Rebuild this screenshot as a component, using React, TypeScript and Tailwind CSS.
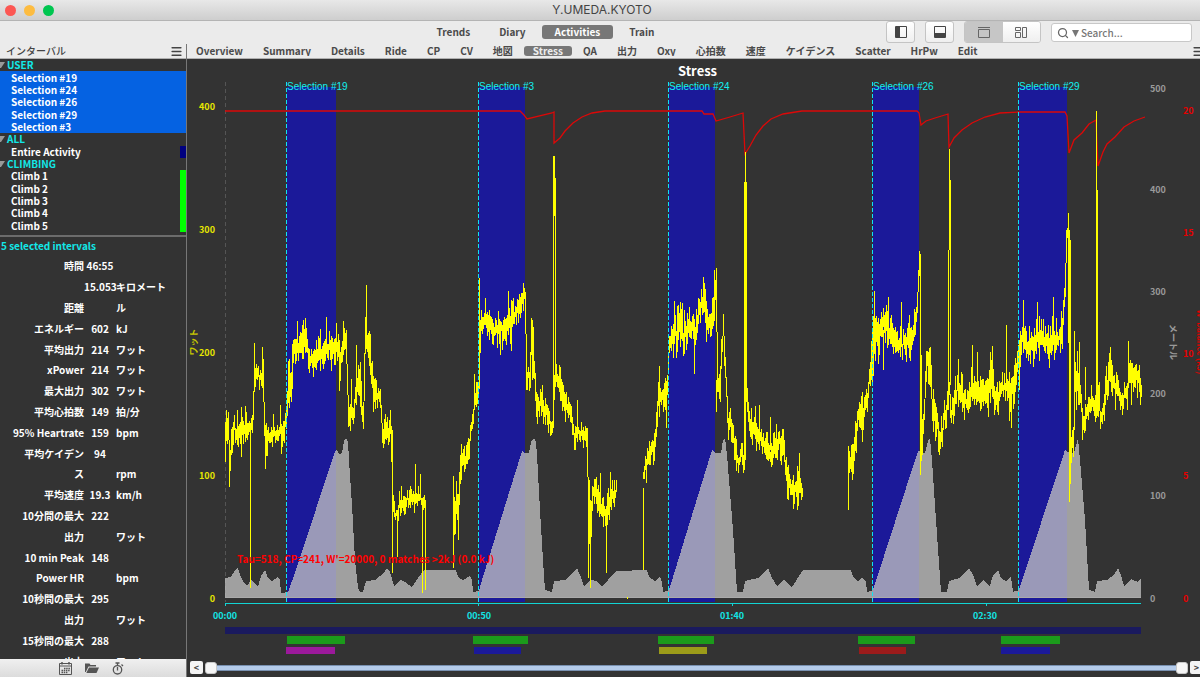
import React, { useState } from 'react';
import { Menu, Search } from 'lucide-react';

const VIEWS = ['Trends', 'Diary', 'Activities', 'Train'];

const TABS = [
  'Overview', 'Summary', 'Details', 'Ride', 'CP', 'CV', '地図', 'Stress', 'QA', '出力',
  'Oxy', '心拍数', '速度', 'ケイデンス', 'Scatter', 'HrPw', 'Edit',
];

interface TreeRow {
  label: string;
  kind: 'group' | 'item';
  selected?: boolean;
  swatch?: string;
}

const TREE: TreeRow[] = [
  { label: 'USER', kind: 'group' },
  { label: 'Selection #19', kind: 'item', selected: true },
  { label: 'Selection #24', kind: 'item', selected: true },
  { label: 'Selection #26', kind: 'item', selected: true },
  { label: 'Selection #29', kind: 'item', selected: true },
  { label: 'Selection #3', kind: 'item', selected: true },
  { label: 'ALL', kind: 'group' },
  { label: 'Entire Activity', kind: 'item', swatch: 'bg-[#000080]' },
  { label: 'CLIMBING', kind: 'group' },
  { label: 'Climb 1', kind: 'item', swatch: 'bg-[#00ff00]' },
  { label: 'Climb 2', kind: 'item', swatch: 'bg-[#00ff00]' },
  { label: 'Climb 3', kind: 'item', swatch: 'bg-[#00ff00]' },
  { label: 'Climb 4', kind: 'item', swatch: 'bg-[#00ff00]' },
  { label: 'Climb 5', kind: 'item', swatch: 'bg-[#00ff00]' },
];

const METRICS: [string, string, string][] = [
  ['時間', '46:55', ''],
  ['', '15.053', 'キロメート'],
  ['距離', '', 'ル'],
  ['エネルギー', '602', 'kJ'],
  ['平均出力', '214', 'ワット'],
  ['xPower', '214', 'ワット'],
  ['最大出力', '302', 'ワット'],
  ['平均心拍数', '149', '拍/分'],
  ['95% Heartrate', '159', 'bpm'],
  ['平均ケイデン', '94', ''],
  ['ス', '', 'rpm'],
  ['平均速度', '19.3', 'km/h'],
  ['10分間の最大', '222', ''],
  ['出力', '', 'ワット'],
  ['10 min Peak', '148', ''],
  ['Power HR', '', 'bpm'],
  ['10秒間の最大', '295', ''],
  ['出力', '', 'ワット'],
  ['15秒間の最大', '288', ''],
  ['出力', '', 'ワット'],
];

const SELECTIONS = [
  { label: 'Selection #19', x: 287, w: 49 },
  { label: 'Selection #3', x: 479, w: 46 },
  { label: 'Selection #24', x: 669, w: 46 },
  { label: 'Selection #26', x: 873, w: 46 },
  { label: 'Selection #29', x: 1019, w: 48 },
];

const CLIMB_BARS = [[287, 58], [473, 55], [658, 56], [858, 57], [1001, 59]];

const USER_BARS: [number, number, string][] = [
  [286, 49, '#9b199b'],
  [474, 47, '#1b1999'],
  [659, 48, '#9b9b19'],
  [859, 47, '#9b1b1b'],
  [1001, 49, '#1b1999'],
];

const ALTITUDE =
  '225,598 225,578 231,577 235,570 238,568 240,575 244,583 247,586 251,580 254,582 258,587 261,576 265,570 268,578 272,581 278,577 280,580 281,593 288,592 292,581 300,558 335,451 337,450 339,454 342,453 344,441 346,438 348,442 349,460 352,505 355,560 358,588 360,592 363,592 366,581 375,580 380,576 384,573 387,568 390,572 394,586 401,580 405,582 412,587 418,578 424,570 ' +
  '456,570 458,577 463,580 470,576 472,580 473,592 479,591 482,580 522,451 525,453 529,453 531,442 534,438 536,442 537,455 540,510 543,560 545,590 552,592 554,581 565,580 570,575 577,568 580,575 584,586 590,580 597,581 602,587 608,580 616,571 ' +
  '647,570 649,577 655,581 660,577 662,582 663,592 669,590 712,450 716,453 721,453 723,440 725,438 727,455 733,530 737,592 743,592 745,581 758,578 768,568 772,578 777,586 784,580 792,587 803,570 ' +
  '851,570 853,577 858,581 862,577 866,582 867,592 873,590 918,451 925,453 928,441 930,438 932,460 936,520 941,592 947,592 949,581 960,578 969,568 973,575 977,586 983,580 990,586 993,575 998,570 1001,578 1006,581 1011,577 1013,592 1019,590 ' +
  '1065,450 1070,453 1074,453 1078,438 1080,460 1085,520 1089,590 1095,592 1097,581 1107,580 1114,575 1118,568 1121,575 1124,586 1131,579 1138,582 1141,578 1141,598';

const W_BALANCE =
  '225,111 520,111 524,115 527,119 552,113 554,112 554,143 560,138 565,131 573,123 582,117 592,113 605,111 702,111 704,114 713,114 716,121 730,117 743,113 745,154 750,146 756,135 763,126 771,119 783,114 802,111 917,111 919,113 921,125 926,121 935,118 948,114 949,147 954,138 962,130 972,123 985,117 1000,113 1019,112 1065,112 1067,116 1069,153 1074,140 1082,133 1089,124 1096,120 1098,166 1103,152 1107,144 1115,137 1124,127 1134,121 1145,117';

// x, y, spread
type Key = [number, number, number];

const POWER: Key[][] = [
  [
    [225, 435, 24], [228, 422, 14], [229, 470, 18], [231, 448, 10], [233, 430, 12], [249, 430, 13], [252, 422, 12],
    [254, 378, 12], [263, 374, 9], [264, 430, 10], [266, 440, 12], [272, 432, 12], [282, 432, 12], [285, 422, 8],
    [287, 410, 10], [289, 385, 22], [292, 370, 18], [293, 348, 15], [297, 348, 12], [303, 340, 14], [306, 342, 16],
    [309, 358, 14], [313, 358, 12], [320, 354, 11], [328, 350, 12], [334, 346, 14], [340, 355, 16], [344, 338, 12],
    [346, 342, 10], [348, 408, 15], [353, 412, 9], [355, 390, 16], [358, 390, 18], [361, 395, 20], [363, 425, 8],
    [365, 335, 18], [368, 345, 20], [372, 385, 14], [377, 398, 11], [380, 393, 10], [382, 433, 14], [391, 432, 12],
    [393, 508, 12], [397, 517, 8], [399, 505, 10], [406, 500, 10], [413, 497, 9], [420, 497, 8], [423, 502, 6], [425, 510, 8],
  ],
  [
    [453, 520, 32], [455, 508, 18], [458, 510, 24], [460, 465, 14], [463, 460, 11], [468, 456, 12], [470, 435, 10],
    [472, 420, 10], [474, 398, 12], [479, 384, 12], [480, 330, 15], [485, 318, 14], [490, 328, 12], [500, 332, 12],
    [505, 325, 13], [510, 320, 15], [518, 310, 13], [523, 298, 12], [525, 290, 6], [526, 368, 14], [529, 380, 9],
    [531, 345, 24], [533, 355, 24], [535, 392, 14], [537, 408, 12], [541, 400, 13], [546, 412, 12], [551, 428, 8],
    [553, 426, 7], [554, 380, 12], [558, 382, 13], [561, 388, 14], [564, 406, 12], [569, 402, 10], [573, 434, 13],
    [578, 435, 10], [585, 432, 9], [587, 452, 16], [588, 510, 40], [590, 530, 36], [592, 490, 10], [596, 495, 14],
    [600, 505, 16], [604, 514, 10], [609, 505, 17], [613, 496, 10], [616, 486, 10],
  ],
  [
    [643, 478, 3], [645, 470, 9], [650, 450, 12], [655, 444, 14], [657, 410, 14], [659, 396, 12], [664, 396, 16],
    [667, 388, 14], [669, 340, 16], [674, 338, 12], [679, 326, 22], [683, 338, 18], [688, 324, 14], [692, 325, 15],
    [695, 338, 18], [699, 310, 18], [703, 302, 16], [706, 325, 18], [711, 322, 14], [714, 294, 16], [716, 283, 12],
    [717, 385, 14], [720, 378, 18], [723, 325, 12], [725, 372, 14], [728, 420, 14], [734, 438, 14], [737, 460, 10],
    [744, 455, 9], [746, 396, 12], [750, 425, 14], [757, 430, 15], [764, 445, 11], [771, 455, 14], [777, 442, 13],
    [783, 448, 13], [786, 480, 13], [791, 490, 11], [797, 490, 13], [802, 490, 6],
  ],
  [
    [848, 460, 10], [852, 462, 14], [855, 440, 14], [858, 416, 12], [862, 410, 14], [866, 402, 12], [870, 375, 10],
    [873, 340, 30], [878, 334, 18], [881, 320, 13], [887, 328, 14], [893, 338, 13], [899, 345, 11], [905, 345, 12],
    [908, 332, 15], [912, 342, 13], [916, 312, 14], [918, 282, 16], [920, 265, 10], [921, 450, 20], [924, 415, 12],
    [926, 360, 16], [930, 362, 14], [932, 410, 16], [936, 416, 15], [940, 438, 13], [946, 410, 10], [949, 385, 12],
    [951, 420, 12], [954, 398, 12], [958, 388, 18], [966, 402, 12], [974, 390, 18], [982, 396, 13], [991, 380, 22],
    [996, 402, 12], [1003, 386, 16], [1010, 392, 18], [1016, 378, 13], [1019, 345, 28], [1023, 335, 14],
    [1030, 350, 16], [1037, 338, 16], [1044, 342, 14], [1051, 342, 18], [1058, 343, 14], [1062, 325, 14],
    [1065, 285, 16], [1066, 235, 8], [1068, 230, 9], [1069, 460, 30], [1073, 435, 18], [1075, 380, 20],
    [1079, 375, 22], [1082, 424, 14], [1087, 410, 14], [1092, 406, 15], [1096, 412, 12], [1098, 400, 18],
    [1101, 420, 12], [1105, 392, 20], [1111, 370, 18], [1115, 385, 14], [1121, 402, 9], [1125, 394, 11],
    [1129, 375, 18], [1136, 378, 15], [1141, 386, 15],
  ],
];

// x, from, to
const SPIKES: Key[] = [
  [237, 410, 440], [245, 406, 430], [241, 430, 457], [229, 450, 487], [250, 430, 588], [254, 343, 380],
  [262, 347, 375], [265, 440, 469], [280, 405, 430], [281, 430, 454], [288, 361, 400], [297, 321, 345],
  [303, 320, 345], [305, 318, 345], [320, 329, 350], [326, 317, 350], [339, 350, 391], [351, 379, 410],
  [356, 345, 390], [366, 285, 335], [370, 334, 370], [390, 410, 430], [392, 430, 573], [397, 510, 557],
  [415, 464, 495], [420, 474, 495], [422, 500, 593], [425, 500, 590], [453, 477, 568], [461, 444, 465],
  [474, 374, 400], [479, 278, 384], [485, 298, 320], [508, 291, 320], [500, 330, 355], [511, 320, 351],
  [532, 320, 380], [553, 156, 425], [554, 156, 216], [555, 178, 380], [577, 400, 435], [560, 367, 385],
  [588, 480, 578], [590, 500, 588], [600, 473, 500], [606, 510, 573], [610, 472, 500], [616, 480, 490],
  [627, 597, 599], [643, 488, 570], [659, 366, 395], [666, 385, 428], [674, 301, 340], [682, 303, 335],
  [694, 330, 374], [703, 277, 300], [714, 270, 290], [716, 273, 300], [716, 380, 412], [723, 314, 330],
  [744, 182, 460], [745, 152, 460], [746, 182, 380], [755, 406, 430], [759, 405, 430], [770, 417, 450],
  [778, 432, 450], [799, 453, 480], [797, 490, 510], [848, 450, 510], [862, 410, 442], [874, 291, 350],
  [888, 297, 325], [883, 330, 370], [901, 302, 345], [920, 254, 270], [920, 262, 475], [948, 250, 390],
  [949, 149, 250], [950, 180, 385], [972, 345, 395], [977, 352, 390], [992, 346, 380], [1006, 325, 385],
  [1011, 390, 428], [1023, 300, 340], [1037, 302, 340], [1053, 297, 340], [1068, 213, 240], [1069, 230, 494],
  [1070, 240, 440], [1074, 331, 430], [1085, 367, 400], [1096, 150, 410], [1096, 111, 200], [1097, 190, 400],
  [1110, 347, 370], [1128, 341, 370],
];

// Seeded so the trace stays the same between renders
const createNoise = (seed: number) => () => {
  seed = (seed * 16807) % 2147483647;
  return seed / 2147483647;
};

const buildPowerPath = () => {
  const noise = createNoise(4129);
  const parts: string[] = [];
  POWER.forEach(keys => {
    let k = 0;
    const points: string[] = [];
    for (let x = keys[0][0]; x <= keys[keys.length - 1][0]; x++) {
      while (k < keys.length - 2 && x > keys[k + 1][0]) k++;
      const [x0, y0, s0] = keys[k];
      const [x1, y1, s1] = keys[k + 1];
      const t = (x - x0) / (x1 - x0);
      const y = y0 + (y1 - y0) * t + (noise() - 0.5) * 10;
      const spread = s0 + (s1 - s0) * t;
      const top = y - spread * (0.35 + noise() ** 2 * 1.2);
      const bottom = y + spread * (0.35 + noise() ** 2 * 1.2);
      points.push(`${x + 0.5} ${Math.round(top)}`, `${x + 0.5} ${Math.round(bottom)}`);
    }
    parts.push(`M${points.join('L')}`);
  });
  SPIKES.forEach(([x, from, to]) => parts.push(`M${x + 0.5} ${from}V${to}`));
  return parts.join('');
};

const POWER_PATH = buildPowerPath();

const StressChart: React.FC = () => (
  <svg
    viewBox="187 81 1013 577"
    className="block w-full h-full min-h-0 flex-1 text-[9px] font-bold"
    role="img"
    aria-label="Stress"
  >
    <path d="M225.5 82V602" stroke="#555" strokeDasharray="4 3" />
    {SELECTIONS.map(s => (
      <rect key={s.label} x={s.x} y={87} width={s.w} height={515} fill="#1b1999" />
    ))}
    <polygon points={ALTITUDE} fill="#c1c1c1" fillOpacity="0.765" shapeRendering="crispEdges" />
    <path d="M225 597.5H1141" stroke="#aaa" />
    <polyline points={W_BALANCE} fill="none" stroke="#dc0808" strokeWidth="1.3" />
    <path d={POWER_PATH} fill="none" stroke="#ffff00" shapeRendering="crispEdges" />
    {SELECTIONS.map(s => (
      <g key={s.label}>
        <path d={`M${s.x - 0.5} 82V602`} stroke="#12e4ee" strokeDasharray="4 2" />
        <text x={s.x} y={90} fill="#12f0f0" fontFamily="Liberation Sans, sans-serif" fontWeight="400" fontSize="10">
          {s.label}
        </text>
      </g>
    ))}
    <text x="237" y="563" fill="#ff0000" fontSize="10">
      Tau=518, CP=241, W'=20000, 0 matches &gt;2kJ (0.0 kJ)
    </text>

    <g fill="#e6e600" textAnchor="end">
      <text x="215" y="110">400</text>
      <text x="215" y="233">300</text>
      <text x="215" y="356">200</text>
      <text x="215" y="479">100</text>
      <text x="215" y="602">0</text>
    </g>
    <g fill="#999">
      <text x="1150" y="92">500</text>
      <text x="1150" y="193">400</text>
      <text x="1150" y="295">300</text>
      <text x="1150" y="397">200</text>
      <text x="1150" y="499">100</text>
      <text x="1150" y="602">0</text>
    </g>
    <g fill="#e60000">
      <text x="1183" y="114">20</text>
      <text x="1183" y="236">15</text>
      <text x="1183" y="357">10</text>
      <text x="1183" y="479">5</text>
      <text x="1183" y="602">0</text>
    </g>
    <g textAnchor="middle">
      <text transform="translate(197 342) rotate(-90)" fill="#c8c800">ワット</text>
      <text transform="translate(1170 342) rotate(90)" fill="#999">メートル</text>
      <text transform="translate(1197 342) rotate(90)" fill="#e60000" fontWeight="500">W' balance (kJ)</text>
    </g>

    <path d="M225 603H1141V604H226V606H225ZM478 604H479V606H478ZM732 604H733V606H732ZM986 604H987V606H986Z" fill="#12d4d4" />
    <g fill="#12e4e4" textAnchor="middle">
      <text x="225" y="619">00:00</text>
      <text x="479" y="619">00:50</text>
      <text x="732" y="619">01:40</text>
      <text x="985" y="619">02:30</text>
    </g>

    <rect x="225" y="627" width="916" height="7" fill="#1a1a5e" />
    {CLIMB_BARS.map(([x, w]) => (
      <rect key={x} x={x} y={636} width={w} height={8} fill="#1b9b1b" />
    ))}
    {USER_BARS.map(([x, w, fill]) => (
      <rect key={x} x={x} y={647} width={w} height={7} fill={fill} />
    ))}
  </svg>
);

const THUMB =
  'pointer-events-none absolute inset-x-0 top-0 h-[13px] w-full appearance-none bg-transparent [&::-webkit-slider-thumb]:pointer-events-auto [&::-webkit-slider-thumb]:h-3 [&::-webkit-slider-thumb]:w-3 [&::-webkit-slider-thumb]:appearance-none [&::-webkit-slider-thumb]:rounded-[3px] [&::-webkit-slider-thumb]:border [&::-webkit-slider-thumb]:border-[#c8c8c8] [&::-webkit-slider-thumb]:bg-[#f6f6f6]';

const RangeBar: React.FC = () => {
  const [from, setFrom] = useState(0);
  const [to, setTo] = useState(100);
  const stepClass = 'h-[13px] w-[13px] shrink-0 rounded-[2px] bg-[#f4f4f4] text-[9px] leading-[12px] font-bold text-[#444]';

  return (
    <div className="flex h-[19px] shrink-0 items-center gap-[2px] overflow-hidden pl-[3px]">
      <button className={stepClass} aria-label="Scroll left">&lt;</button>
      <div className="relative flex h-[13px] flex-1 items-center">
        <div className="mx-1 h-[6px] flex-1 border-y border-[#7890b0] bg-[#b4cbea]" />
        <input type="range" aria-label="Range start" value={from} onChange={e => setFrom(Number(e.target.value))} className={THUMB} />
        <input type="range" aria-label="Range end" value={to} onChange={e => setTo(Number(e.target.value))} className={THUMB} />
      </div>
      <button className={`${stepClass} -mr-[3px]`} aria-label="Scroll right">&gt;</button>
    </div>
  );
};

const Sidebar: React.FC = () => (
  <aside className="flex w-[187px] shrink-0 flex-col border-r border-[#777] bg-[#333] text-[10px] font-bold text-white">
    <div className="flex h-[15px] shrink-0 items-center justify-between border-b border-[#b0b0b0] bg-[#ebebeb] pr-[3px] pl-[6px] text-[#444]">
      <h2 className="leading-[14px] font-medium">インターバル</h2>
      <button aria-label="Interval menu"><Menu size={13} strokeWidth={3} /></button>
    </div>
    <ul className="flex h-[173px] shrink-0 flex-col">
      {TREE.map(row => (
        <li
          key={row.label}
          className={`flex min-h-0 flex-1 items-center justify-between ${row.selected ? 'bg-[#0562e2]' : ''}`}
        >
          {row.kind === 'group' ? (
            <span className="flex items-center gap-[2px] leading-[12px] text-[#12e8e8]">
              <svg viewBox="0 0 5 6" className="h-[6px] w-[5px]"><path d="M0 0H5L1 6H0Z" fill="#999" /></svg>
              {row.label}
            </span>
          ) : (
            <span className="pl-[11px] leading-[12px]">{row.label}</span>
          )}
          {row.swatch && <span className={`w-[6px] self-stretch ${row.swatch}`} />}
        </li>
      ))}
    </ul>
    <div className="mt-[3px] h-[2px] shrink-0 bg-[#6c6c6c]" />
    <section className="min-h-0 flex-1 overflow-hidden">
      <h3 className="h-[19px] pl-[1px] leading-[17px] text-[#12e8e8]">5 selected intervals</h3>
      <table className="h-[416px] w-full table-fixed border-collapse leading-[16px] whitespace-nowrap">
        <tbody>
          {METRICS.map(([label, value, unit], i) => (
            <tr key={i}>
              <th scope="row" className="w-[84px] p-0 text-right">{label}</th>
              <td className="w-8 p-0 text-center">{value}</td>
              <td className="p-0">{unit}</td>
            </tr>
          ))}
        </tbody>
      </table>
    </section>
    <div className="flex h-[18px] shrink-0 items-center justify-center gap-[13px] bg-gradient-to-b from-[#f0f0f0] to-[#dcdcdc] text-[#555]">
      <button aria-label="Calendar" className="-ml-1">
        <svg viewBox="0 0 13 13" className="h-[13px] w-[13px]">
          <path d="M.5 1.500H12.500V12.500H.5ZM.5 4H12.500" fill="none" stroke="currentColor" />
          <path d="M3 0V2.500M10 0V2.500" stroke="currentColor" strokeWidth="1.500" />
          <path d="M5 6.500H11M2.500 8.500H11M2.500 10.500H9" stroke="currentColor" strokeWidth="1.300" strokeDasharray="1.500 .7" />
        </svg>
      </button>
      <button aria-label="Open folder">
        <svg viewBox="0 0 14 12" className="h-3 w-[14px]">
          <path d="M0 10V1.500H4.500L5.500 3H11V4.500H3.500L.8 10Z" fill="currentColor" />
          <path d="M4 5.500H14L11.500 11H1.300Z" fill="currentColor" />
        </svg>
      </button>
      <button aria-label="Stopwatch">
        <svg viewBox="0 0 12 13" className="h-[13px] w-3" fill="none" stroke="currentColor">
          <circle cx="5.500" cy="7.800" r="4.200" strokeWidth="1.300" />
          <path d="M5.500 5V8.500M5.500 1V3.500M3.500 1H7.500M9.500 2.500L11 4" strokeWidth="1.300" />
        </svg>
      </button>
    </div>
  </aside>
);

const App: React.FC = () => {
  const [view, setView] = useState('Activities');
  const [tab, setTab] = useState('Stress');
  const toolButton = 'flex h-[22px] w-[29px] items-center justify-center rounded-[3px] border border-[#c4c4c4] bg-gradient-to-b from-white to-[#efefef] text-[#444]';

  return (
    <div className="flex h-screen flex-col overflow-hidden bg-[#333] font-['Noto_Sans_CJK_JP',sans-serif] select-none">
      <header className="grid h-[21px] shrink-0 grid-cols-[1fr_auto_1fr] items-center border-b border-[#b4b4b4] bg-gradient-to-b from-[#e8e8e8] to-[#cecece]">
        <div className="flex gap-2 pl-[5px]">
          <button aria-label="Close" className="h-[11px] w-[11px] rounded-full bg-[#fc5753]" />
          <button aria-label="Minimize" className="h-[11px] w-[11px] rounded-full bg-[#fdbc40]" />
          <button aria-label="Zoom" className="h-[11px] w-[11px] rounded-full bg-[#00c650]" />
        </div>
        <h1 className="pl-1 font-['Inter',sans-serif] text-[12px] leading-5 text-[#444]">Y.UMEDA.KYOTO</h1>
      </header>

      <div className="grid h-[23px] shrink-0 grid-cols-[1fr_auto_1fr] items-start bg-[#ebebeb]">
        <nav className="col-start-2 flex gap-[3px] pt-1 pr-[109px] text-[10px] font-bold">
          {VIEWS.map(v => (
            <button
              key={v}
              onClick={() => setView(v)}
              className={`h-[14px] rounded-[3px] px-[13px] leading-[14px] ${view === v ? 'bg-[#777] text-white' : 'text-[#4a4a4a]'}`}
            >
              {v}
            </button>
          ))}
        </nav>
        <div className="flex justify-end gap-[10px] pr-2">
          <button className={toolButton} aria-label="Toggle sidebar">
            <svg viewBox="0 0 12 12" className="h-3 w-3"><path d="M.5.5H11.500V11.500H.5Z" fill="none" stroke="currentColor" /><path d="M1 1H5V11H1Z" fill="currentColor" /></svg>
          </button>
          <button className={toolButton} aria-label="Toggle lower panel">
            <svg viewBox="0 0 12 12" className="h-3 w-3"><path d="M.5.5H11.500V11.500H.5Z" fill="none" stroke="currentColor" /><path d="M1 7H11V11H1Z" fill="currentColor" /></svg>
          </button>
          <div className="flex h-[22px] w-[77px] overflow-hidden rounded-[3px] border border-[#c4c4c4] text-[#666]">
            <button aria-label="Tabbed view" className="flex flex-1 items-center justify-center bg-[#c6c6c6]">
              <svg viewBox="0 0 12 11" className="h-[11px] w-3" fill="none" stroke="currentColor"><path d="M0 .5H12M.5 2.500H11.500V10.500H.5Z" /></svg>
            </button>
            <button aria-label="Tiled view" className="flex flex-1 items-center justify-center bg-gradient-to-b from-white to-[#efefef]">
              <svg viewBox="0 0 12 11" className="h-[11px] w-3" fill="none" stroke="currentColor"><path d="M.5.5H5.500V3.500H.5ZM.5 5.500H5.500V10.500H.5ZM7.500.5H11.500V10.500H7.500Z" /></svg>
            </button>
          </div>
          <label className="mt-[2px] flex h-[19px] w-[141px] items-center gap-[2px] rounded-[3px] border border-[#c8c8c8] bg-white px-[5px] text-[#666]">
            <Search size={12} strokeWidth={2.5} className="shrink-0" />
            <svg viewBox="0 0 7 7" className="mt-[2px] ml-[1px] h-[7px] w-[7px] shrink-0"><path d="M0 0H7L3.500 7Z" fill="#777" /></svg>
            <input aria-label="Search" placeholder="Search..." className="min-w-0 flex-1 bg-transparent text-[10px] font-medium outline-none placeholder:text-[#777]" />
          </label>
        </div>
      </div>

      <div className="flex min-h-0 flex-1 bg-[#333]">
        <Sidebar />
        <main className="flex min-w-0 flex-1 flex-col">
          <div className="flex h-[15px] shrink-0 items-center justify-between overflow-hidden border-b border-[#b0b0b0] bg-[#ebebeb]">
            <nav className="flex gap-[2px] text-[10px] font-bold">
              {TABS.map(t => (
                <button
                  key={t}
                  onClick={() => setTab(t)}
                  className={`flex h-[10px] items-center overflow-hidden rounded-[3px] px-[9px] leading-[10px] whitespace-nowrap ${tab === t ? 'bg-[#777] text-[#eee]' : 'text-[#4a4a4a]'}`}
                >
                  {t}
                </button>
              ))}
            </nav>
            <button aria-label="Chart menu" className="-mr-[5px] text-[#444]"><Menu size={13} strokeWidth={3} /></button>
          </div>
          <h2 className="shrink-0 pt-[1px] pl-2 text-center text-[13px] leading-[21px] font-bold text-white">Stress</h2>
          <StressChart />
          <RangeBar />
        </main>
      </div>
    </div>
  );
};

export default App;
